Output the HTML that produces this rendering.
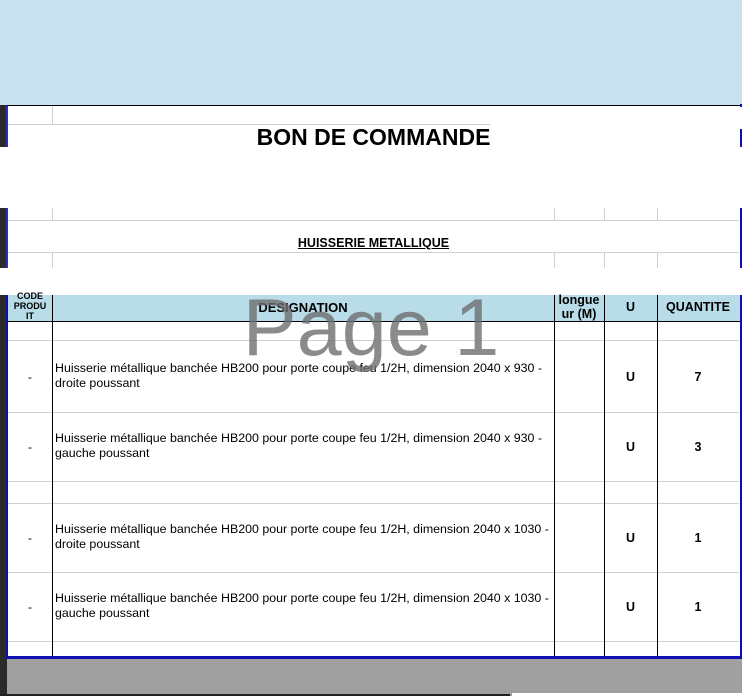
<!DOCTYPE html>
<html><head><meta charset="utf-8"><style>
*{margin:0;padding:0;box-sizing:border-box}
body{width:742px;height:696px;position:relative;overflow:hidden;background:#fff;font-family:"Liberation Sans",Arial,sans-serif;color:#000}
.a{position:absolute}
.t{font-size:12.4px;line-height:15px}
.c{text-align:center;font-weight:bold;font-size:12.5px}
</style></head><body>
<div class="a" style="left:0;top:0;width:742px;height:105px;background:#c8e0ef"></div>
<div class="a" style="left:0;top:105px;width:7px;height:42px;background:#2b2b2b"></div>
<div class="a" style="left:0;top:208px;width:7px;height:60px;background:#2b2b2b"></div>
<div class="a" style="left:0;top:295px;width:7px;height:401px;background:#2b2b2b"></div>
<div class="a" style="left:6px;top:105px;width:2px;height:42px;background:#3030c0"></div>
<div class="a" style="left:6px;top:208px;width:2px;height:60px;background:#3030c0"></div>
<div class="a" style="left:6px;top:295px;width:2px;height:363px;background:#1010b0"></div>
<div class="a" style="left:740px;top:104px;width:2px;height:3px;background:#1010b0"></div>
<div class="a" style="left:740px;top:129px;width:2px;height:18px;background:#1010b0"></div>
<div class="a" style="left:740px;top:208px;width:2px;height:60px;background:#1010b0"></div>
<div class="a" style="left:740px;top:295px;width:2px;height:363px;background:#1010b0"></div>
<div class="a" style="left:7px;top:105px;width:733px;height:1px;background:#000"></div>
<div class="a" style="left:8px;top:124px;width:482px;height:1px;background:#d0d0d0"></div>
<div class="a" style="left:52px;top:106px;width:1px;height:18px;background:#d0d0d0"></div>
<div class="a" style="left:8px;top:220px;width:731px;height:1px;background:#d0d0d0"></div>
<div class="a" style="left:8px;top:252px;width:731px;height:1px;background:#d0d0d0"></div>
<div class="a" style="left:52px;top:208px;width:1px;height:12px;background:#d0d0d0"></div>
<div class="a" style="left:52px;top:253px;width:1px;height:15px;background:#d0d0d0"></div>
<div class="a" style="left:554px;top:208px;width:1px;height:12px;background:#d0d0d0"></div>
<div class="a" style="left:554px;top:253px;width:1px;height:15px;background:#d0d0d0"></div>
<div class="a" style="left:604px;top:208px;width:1px;height:12px;background:#d0d0d0"></div>
<div class="a" style="left:604px;top:253px;width:1px;height:15px;background:#d0d0d0"></div>
<div class="a" style="left:657px;top:208px;width:1px;height:12px;background:#d0d0d0"></div>
<div class="a" style="left:657px;top:253px;width:1px;height:15px;background:#d0d0d0"></div>
<div class="a" style="left:0;top:124px;width:742px;text-align:center;font-weight:bold;font-size:23px;padding-left:5px">BON DE COMMANDE</div>
<div class="a" style="left:0;top:236px;width:742px;text-align:center;font-weight:bold;font-size:12.5px;text-decoration:underline;padding-left:5px">HUISSERIE METALLIQUE</div>
<div class="a" style="left:8px;top:295px;width:732px;height:27px;background:#b8dde8;border-bottom:1px solid #000"></div>
<div class="a c" style="left:8px;top:291px;width:44px;font-size:9px;line-height:10px">CODE<br>PRODU<br>IT</div>
<div class="a c" style="left:52px;top:300px;width:502px;font-size:13px">DESIGNATION</div>
<div class="a c" style="left:554px;top:293px;width:50px;line-height:14px">longue<br>ur (M)</div>
<div class="a c" style="left:604px;top:300px;width:53px">U</div>
<div class="a c" style="left:657px;top:300px;width:82px">QUANTITE</div>
<div class="a" style="left:8px;top:340px;width:731px;height:1px;background:#d0d0d0"></div>
<div class="a" style="left:8px;top:412px;width:731px;height:1px;background:#d0d0d0"></div>
<div class="a" style="left:8px;top:481px;width:731px;height:1px;background:#d0d0d0"></div>
<div class="a" style="left:8px;top:503px;width:731px;height:1px;background:#d0d0d0"></div>
<div class="a" style="left:8px;top:572px;width:731px;height:1px;background:#d0d0d0"></div>
<div class="a" style="left:8px;top:641px;width:731px;height:1px;background:#d0d0d0"></div>
<div class="a" style="left:52px;top:295px;width:1px;height:362px;background:#000"></div>
<div class="a" style="left:554px;top:295px;width:1px;height:362px;background:#000"></div>
<div class="a" style="left:604px;top:295px;width:1px;height:362px;background:#000"></div>
<div class="a" style="left:657px;top:295px;width:1px;height:362px;background:#000"></div>
<div class="a t" style="left:8px;top:370px;width:44px;text-align:center">-</div>
<div class="a t" style="left:55px;top:361px;width:498px">Huisserie métallique banchée HB200 pour porte coupe feu 1/2H, dimension 2040 x 930 - droite poussant</div>
<div class="a c" style="left:604px;top:370px;width:53px">U</div><div class="a c" style="left:657px;top:370px;width:82px">7</div>
<div class="a t" style="left:8px;top:440px;width:44px;text-align:center">-</div>
<div class="a t" style="left:55px;top:431px;width:498px">Huisserie métallique banchée HB200 pour porte coupe feu 1/2H, dimension 2040 x 930 - gauche poussant</div>
<div class="a c" style="left:604px;top:440px;width:53px">U</div><div class="a c" style="left:657px;top:440px;width:82px">3</div>
<div class="a t" style="left:8px;top:531px;width:44px;text-align:center">-</div>
<div class="a t" style="left:55px;top:522px;width:498px">Huisserie métallique banchée HB200 pour porte coupe feu 1/2H, dimension 2040 x 1030 - droite poussant</div>
<div class="a c" style="left:604px;top:531px;width:53px">U</div><div class="a c" style="left:657px;top:531px;width:82px">1</div>
<div class="a t" style="left:8px;top:600px;width:44px;text-align:center">-</div>
<div class="a t" style="left:55px;top:591px;width:498px">Huisserie métallique banchée HB200 pour porte coupe feu 1/2H, dimension 2040 x 1030 - gauche poussant</div>
<div class="a c" style="left:604px;top:600px;width:53px">U</div><div class="a c" style="left:657px;top:600px;width:82px">1</div>
<div class="a" style="left:0;top:283px;width:742px;text-align:center;font-size:81px;line-height:90px;color:rgba(110,110,110,0.8)">Page 1</div>
<div class="a" style="left:6px;top:656px;width:736px;height:3px;background:#1010b0"></div>
<div class="a" style="left:7px;top:659px;width:735px;height:37px;background:#a0a0a0"></div>
<div class="a" style="left:0;top:694px;width:510px;height:2px;background:#222"></div>
<div class="a" style="left:512px;top:693px;width:230px;height:3px;background:#fff"></div>
</body></html>
